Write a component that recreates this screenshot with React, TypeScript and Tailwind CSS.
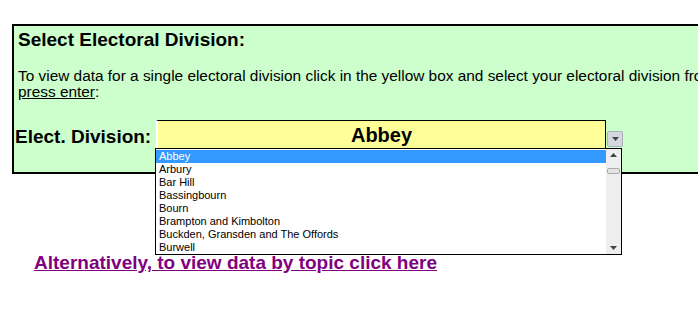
import { useState } from "react";

const divisions = [
  "Abbey",
  "Arbury",
  "Bar Hill",
  "Bassingbourn",
  "Bourn",
  "Brampton and Kimbolton",
  "Buckden, Gransden and The Offords",
  "Burwell",
];

function DropArrow({ up = false }: { up?: boolean }) {
  return (
    <svg width="7" height="4" viewBox="0 0 7 4">
      <path d={up ? "M0 4 L3.5 0 L7 4 Z" : "M0 0 L7 0 L3.5 4 Z"} fill="#444" />
    </svg>
  );
}

export default function App() {
  const [selected, setSelected] = useState("Abbey");

  return (
    <div
      className="relative w-[698px] h-[311px] overflow-hidden bg-white text-black"
      style={{ fontFamily: '"Liberation Sans", Arial, sans-serif' }}
    >
      <div className="pt-[24px] pl-[12px]">
        {/* Green panel */}
        <div className="w-[900px] h-[150px] border-2 border-black bg-[#ccffcc] pl-[4px] pt-[3px]">
          <h2 className="text-[19px] font-bold leading-[22px]">Select Electoral Division:</h2>
          <p className="mt-[17px] text-[15.4px] leading-[16px] whitespace-nowrap">
            To view data for a single electoral division click in the yellow box and select your electoral division from the list and
            <br />
            <span className="underline">press enter</span>:
          </p>
          <div className="flex items-end mt-[20px] -ml-[3px]">
            <span className="text-[19px] font-bold leading-[22px] w-[141px]">Elect. Division:</span>
            <div className="flex items-end">
              <div className="w-[450px] h-[28px] bg-[#ffff99] border-t border-r border-black border-l-2 border-l-white flex items-center justify-center text-[20px] font-bold">
                {selected}
              </div>
              <div className="w-[16px] h-[16px] mb-[1px] ml-[1px] rounded-[2px] bg-[#d4d8de] border border-[#a9afb8] flex items-center justify-center">
                <DropArrow />
              </div>
            </div>
          </div>
        </div>

        <a
          href="#"
          className="block mt-[79px] ml-[22px] text-[19px] font-bold leading-[20px] text-[#800080] underline"
        >
          Alternatively, to view data by topic click here
        </a>
      </div>

      {/* Open dropdown list */}
      <div
        className="absolute left-[155px] top-[148px] w-[467px] h-[107px] bg-white border border-black flex"
        style={{ fontFamily: "Tahoma, \"Liberation Sans\", sans-serif" }}
      >
        <ul className="flex-1 pt-[1px]">
          {divisions.map((d) => (
            <li
              key={d}
              onClick={() => setSelected(d)}
              className={`h-[13px] leading-[13px] pl-[3px] text-[11px] ${
                d === selected ? "bg-[#3399ff] text-white" : "text-black"
              }`}
            >
              {d}
            </li>
          ))}
        </ul>
        <div className="w-[15px] bg-[#eeeeee] flex flex-col items-center py-[4px]">
          <DropArrow up />
          <div className="mt-[11px] w-[13px] h-[6px] rounded-[2px] bg-[#e4e4e4] border border-[#a9a9a9]" />
          <div className="flex-1" />
          <DropArrow />
        </div>
      </div>
    </div>
  );
}
